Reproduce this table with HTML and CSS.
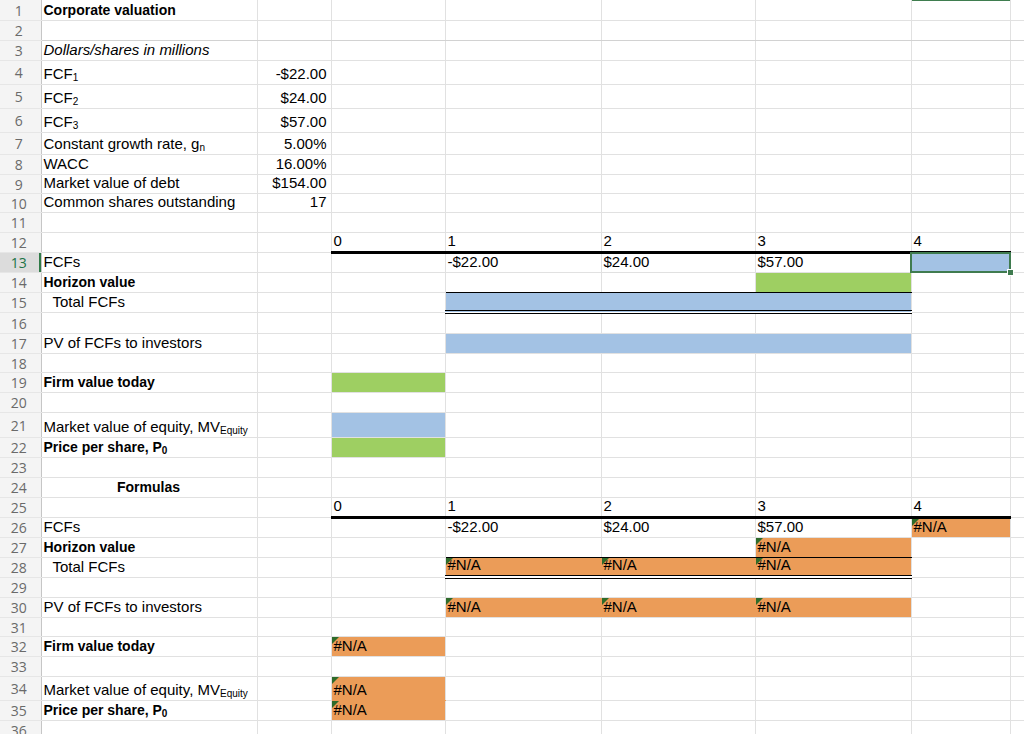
FILE: index.html
```html
<!DOCTYPE html>
<html lang="en">
<head>
<meta charset="utf-8">
<title>Corporate valuation</title>
<link rel="stylesheet" href="styles.css">
</head>
<body>
<table class="sheet">
<colgroup>
<col class="c-rn"><col class="c-a"><col class="c-b"><col class="c-c"><col class="c-d"><col class="c-e"><col class="c-f"><col class="c-g"><col class="c-h">
</colgroup>
<tbody>
<tr><th class="rn">1</th><td class="b">Corporate valuation</td><td></td><td></td><td></td><td></td><td></td><td class="colsel"></td><td></td></tr>
<tr class="r2"><th class="rn">2</th><td></td><td></td><td></td><td></td><td></td><td></td><td></td><td></td></tr>
<tr><th class="rn">3</th><td class="i">Dollars/shares in millions</td><td></td><td></td><td></td><td></td><td></td><td></td><td></td></tr>
<tr class="h24"><th class="rn">4</th><td>FCF<sub>1</sub></td><td class="r">-$22.00</td><td></td><td></td><td></td><td></td><td></td><td></td></tr>
<tr class="h24"><th class="rn">5</th><td>FCF<sub>2</sub></td><td class="r">$24.00</td><td></td><td></td><td></td><td></td><td></td><td></td></tr>
<tr class="h24"><th class="rn">6</th><td>FCF<sub>3</sub></td><td class="r">$57.00</td><td></td><td></td><td></td><td></td><td></td><td></td></tr>
<tr class="h22"><th class="rn">7</th><td>Constant growth rate, g<sub>n</sub></td><td class="r">5.00%</td><td></td><td></td><td></td><td></td><td></td><td></td></tr>
<tr><th class="rn">8</th><td>WACC</td><td class="r">16.00%</td><td></td><td></td><td></td><td></td><td></td><td></td></tr>
<tr class="h19"><th class="rn">9</th><td>Market value of debt</td><td class="r">$154.00</td><td></td><td></td><td></td><td></td><td></td><td></td></tr>
<tr class="h19"><th class="rn">10</th><td>Common shares outstanding</td><td class="r">17</td><td></td><td></td><td></td><td></td><td></td><td></td></tr>
<tr><th class="rn">11</th><td></td><td></td><td></td><td></td><td></td><td></td><td></td><td></td></tr>
<tr><th class="rn">12</th><td></td><td></td><td class="tk">0</td><td class="tk">1</td><td class="tk">2</td><td class="tk">3</td><td class="tk">4</td><td></td></tr>
<tr><th class="rn cur">13</th><td>FCFs</td><td></td><td></td><td>-$22.00</td><td>$24.00</td><td>$57.00</td><td class="blue sel"></td><td></td></tr>
<tr><th class="rn">14</th><td class="b">Horizon value</td><td></td><td></td><td class="bb"></td><td class="bb"></td><td class="bb green"></td><td></td><td></td></tr>
<tr><th class="rn">15</th><td class="ind">Total FCFs</td><td></td><td></td><td class="blue fr dbl"></td><td class="blue fr dbl"></td><td class="blue dbl"></td><td></td><td></td></tr>
<tr class="h21"><th class="rn">16</th><td></td><td></td><td></td><td></td><td></td><td></td><td></td><td></td></tr>
<tr><th class="rn">17</th><td>PV of FCFs to investors</td><td></td><td></td><td class="blue fr"></td><td class="blue fr"></td><td class="blue"></td><td></td><td></td></tr>
<tr class="h19"><th class="rn">18</th><td></td><td></td><td></td><td></td><td></td><td></td><td></td><td></td></tr>
<tr><th class="rn">19</th><td class="b">Firm value today</td><td></td><td class="green"></td><td></td><td></td><td></td><td></td><td></td></tr>
<tr><th class="rn">20</th><td></td><td></td><td></td><td></td><td></td><td></td><td></td><td></td></tr>
<tr class="h25"><th class="rn">21</th><td>Market value of equity, MV<sub>Equity</sub></td><td></td><td class="blue"></td><td></td><td></td><td></td><td></td><td></td></tr>
<tr><th class="rn">22</th><td class="b">Price per share, P<sub>0</sub></td><td></td><td class="green"></td><td></td><td></td><td></td><td></td><td></td></tr>
<tr><th class="rn">23</th><td></td><td></td><td></td><td></td><td></td><td></td><td></td><td></td></tr>
<tr><th class="rn">24</th><td class="b ctr">Formulas</td><td></td><td></td><td></td><td></td><td></td><td></td><td></td></tr>
<tr><th class="rn">25</th><td></td><td></td><td class="tk">0</td><td class="tk">1</td><td class="tk">2</td><td class="tk">3</td><td class="tk">4</td><td></td></tr>
<tr><th class="rn">26</th><td>FCFs</td><td></td><td></td><td>-$22.00</td><td>$24.00</td><td>$57.00</td><td class="orange err">#N/A</td><td></td></tr>
<tr><th class="rn">27</th><td class="b">Horizon value</td><td></td><td></td><td class="bb"></td><td class="bb"></td><td class="bb orange err">#N/A</td><td></td><td></td></tr>
<tr><th class="rn">28</th><td class="ind">Total FCFs</td><td></td><td></td><td class="orange err fr dbl">#N/A</td><td class="orange err fr dbl">#N/A</td><td class="orange err dbl">#N/A</td><td></td><td></td></tr>
<tr><th class="rn">29</th><td></td><td></td><td></td><td></td><td></td><td></td><td></td><td></td></tr>
<tr><th class="rn">30</th><td>PV of FCFs to investors</td><td></td><td></td><td class="orange err fr">#N/A</td><td class="orange err fr">#N/A</td><td class="orange err">#N/A</td><td></td><td></td></tr>
<tr class="h19"><th class="rn">31</th><td></td><td></td><td></td><td></td><td></td><td></td><td></td><td></td></tr>
<tr><th class="rn">32</th><td class="b">Firm value today</td><td></td><td class="orange err">#N/A</td><td></td><td></td><td></td><td></td><td></td></tr>
<tr><th class="rn">33</th><td></td><td></td><td></td><td></td><td></td><td></td><td></td><td></td></tr>
<tr class="h24"><th class="rn">34</th><td>Market value of equity, MV<sub>Equity</sub></td><td></td><td class="orange err fb">#N/A</td><td></td><td></td><td></td><td></td><td></td></tr>
<tr><th class="rn">35</th><td class="b">Price per share, P<sub>0</sub></td><td></td><td class="orange err">#N/A</td><td></td><td></td><td></td><td></td><td></td></tr>
<tr><th class="rn">36</th><td></td><td></td><td></td><td></td><td></td><td></td><td></td><td></td></tr>
</tbody>
</table>
</body>
</html>
```

FILE: styles.css
```css
html, body {
  margin: 0;
  padding: 0;
  background: #ffffff;
}

body {
  font-family: "Liberation Sans", Arial, Helvetica, sans-serif;
  font-size: 15px;
  color: #000000;
  overflow: hidden;
}

.sheet {
  border-collapse: collapse;
  table-layout: fixed;
  width: 1024px;
}

.c-rn { width: 41px; }
.c-a { width: 216px; }
.c-b { width: 74px; }
.c-c { width: 114px; }
.c-d { width: 156px; }
.c-e { width: 154px; }
.c-f { width: 156px; }
.c-g { width: 99px; }
.c-h { width: 14px; }

.sheet tr { height: 20px; }
.sheet tr.h19 { height: 19px; }
.sheet tr.h21 { height: 21px; }
.sheet tr.h22 { height: 22px; }
.sheet tr.h24 { height: 24px; }
.sheet tr.h25 { height: 25px; }

.sheet td {
  border-right: 1px solid #e1e1e1;
  border-bottom: 1px solid #e1e1e1;
  padding: 0 3px 5px 2px;
  vertical-align: bottom;
  white-space: nowrap;
  overflow: visible;
  line-height: 10px;
}

.sheet tr.r2 td { border-bottom-color: #d2d2d2; }

.sheet th.rn {
  font-family: "Open Sans", "Liberation Sans", sans-serif;
  font-weight: 400;
  font-size: 14px;
  color: #6a6a6a;
  background: #f4f4f4;
  border-right: 1px solid #c6c6c6;
  border-bottom: 1px solid #e6e6e6;
  text-align: center;
  vertical-align: middle;
  padding: 2px 3px 0 0;
  line-height: 12px;
}

.sheet th.rn.cur {
  background: #dcdcdc;
  color: #217346;
  box-shadow: inset -2px 0 0 #2f7a47;
}

sub {
  font-size: 10px;
  line-height: 0;
  vertical-align: -2px;
}

.b { font-weight: 700; font-size: 14px; }
.i { font-style: italic; }
.r { text-align: right; }
.sheet td.r { padding-right: 4px; }
.ctr { text-align: center; }
.sheet td.ind { padding-left: 11px; }

.blue { background: #a3c2e4; }
.green { background: #9ecf62; }
.orange { background: #eb9c58; }

.sheet td.blue.fr { border-right-color: #a3c2e4; }
.sheet td.orange.fr { border-right-color: #eb9c58; }
.sheet td.orange.fb { border-bottom-color: #eb9c58; }

.sheet td.tk { border-bottom: 3px solid #000000; }
.sheet td.bb { border-bottom: 1px solid #000000; }
.sheet td.dbl { border-bottom: 4px double #000000; }

.sheet td.colsel { box-shadow: inset 0 1px 0 #3f7d4f; }

.sheet td.sel { position: relative; }
.sheet td.sel::after {
  content: "";
  position: absolute;
  left: -2px;
  top: -2px;
  right: -1px;
  bottom: -1px;
  border: 2px solid #3f7b4f;
}
.sheet td.sel::before {
  content: "";
  position: absolute;
  right: -4px;
  bottom: -4px;
  width: 5px;
  height: 5px;
  background: #3f7b4f;
  border: 1px solid #ffffff;
  z-index: 2;
}

.sheet td.err { position: relative; }
.sheet td.err::before {
  content: "";
  position: absolute;
  left: 0;
  top: 0;
  width: 0;
  height: 0;
  border-top: 7px solid #2e6b2a;
  border-right: 7px solid transparent;
}
```
